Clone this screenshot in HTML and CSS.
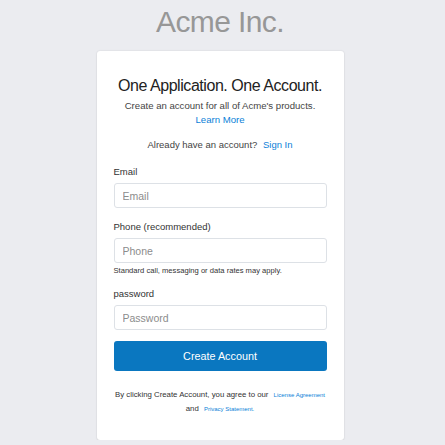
FILE: index.html
```html
<!DOCTYPE html>
<html>
<head>
<meta charset="utf-8">
<link rel="stylesheet" href="styles.css">
</head>
<body>
<div class="page">
  <h1 class="brand">Acme Inc.</h1>
  <div class="card">
    <h2 class="heading">One Application. One Account.</h2>
    <p class="sub">Create an account for all of Acme's products.</p>
    <p class="sub"><a class="link">Learn More</a></p>
    <p class="signin">Already have an account? <a class="link">Sign In</a></p>
    <form class="form">
      <label class="label">Email</label>
      <input class="input" placeholder="Email">
      <label class="label gap">Phone (recommended)</label>
      <input class="input" placeholder="Phone">
      <p class="note">Standard call, messaging or data rates may apply.</p>
      <label class="label gap2">password</label>
      <input class="input" placeholder="Password">
      <button type="button" class="btn">Create Account</button>
    </form>
    <p class="terms">By clicking Create Account, you agree to our <a class="small-link">License Agreement</a></p>
    <p class="terms">and <a class="small-link">Privacy Statement.</a></p>
  </div>
</div>
</body>
</html>
```
FILE: styles.css
```css
* { box-sizing: border-box; }
html, body { margin: 0; padding: 0; }
body {
  background: #ebecf0;
  font-family: "Liberation Sans", Arial, sans-serif;
  color: #333;
}
.page {
  width: 440px;
  display: flex;
  flex-direction: column;
  align-items: center;
}
.brand {
  margin: 0;
  padding: 4px 0 11px;
  font-size: 30px;
  line-height: 36px;
  font-weight: 400;
  letter-spacing: -0.6px;
  color: #979797;
}
.card {
  width: 247px;
  background: #fff;
  border-radius: 3px;
  box-shadow: 0 0 2px rgba(0,0,0,0.12), 0 1px 2px rgba(0,0,0,0.06);
  padding: 25px 17px 24px;
  display: flex;
  flex-direction: column;
}
.heading {
  margin: 0;
  font-size: 16px;
  line-height: 20px;
  font-weight: 400;
  letter-spacing: -0.45px;
  text-align: center;
  color: #222;
}
.sub {
  margin: 0;
  font-size: 9.6px;
  line-height: 14px;
  text-align: center;
  color: #444;
}
.heading + .sub { margin-top: 3px; }
.link { color: #0b7fd8; text-decoration: none; }
.signin {
  margin: 11px 0 0;
  font-size: 9.5px;
  line-height: 14px;
  text-align: center;
  color: #444;
}
.signin .link { margin-left: 3px; }
.form {
  margin: 13px 0 0;
  display: flex;
  flex-direction: column;
}
.label {
  font-size: 9.5px;
  line-height: 14px;
  color: #333;
  margin-bottom: 4px;
}
.gap { margin-top: 12px; }
.gap2 { margin-top: 11px; }
.input {
  height: 25px;
  width: 100%;
  border: 1px solid #dde1e6;
  border-radius: 3px;
  padding: 0 8px;
  font-family: "Liberation Sans", Arial, sans-serif;
  font-size: 10.5px;
  color: #333;
  background: #fff;
  outline: none;
}
.input::placeholder { color: #8c8c8c; }
.note {
  margin: 3px 0 0;
  font-size: 7.6px;
  line-height: 10px;
  color: #333;
}
.btn {
  margin-top: 11px;
  height: 30px;
  width: 100%;
  border: 0;
  border-radius: 3px;
  background: #0a77c0;
  color: #fff;
  font-family: "Liberation Sans", Arial, sans-serif;
  font-size: 10.8px;
}
.terms {
  margin: 0;
  font-size: 7.8px;
  line-height: 14px;
  text-align: center;
  color: #333;
}
.form + .terms { margin-top: 17px; }
.small-link {
  color: #0b7fd8;
  font-size: 6px;
  margin-left: 3px;
}
```
